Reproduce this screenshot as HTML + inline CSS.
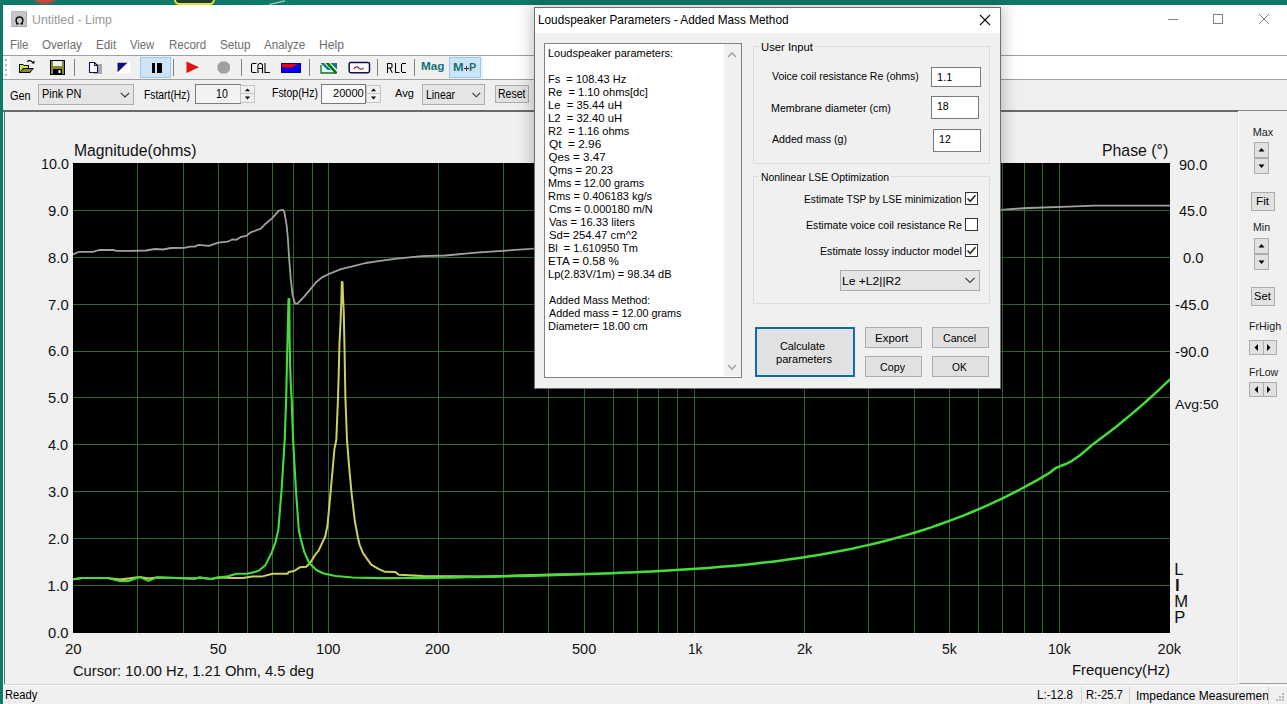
<!DOCTYPE html>
<html><head><meta charset="utf-8">
<style>
*{box-sizing:border-box}
html,body{margin:0;padding:0}
body{width:1287px;height:704px;overflow:hidden;position:relative;background:#0f7a6a;font-family:"Liberation Sans",sans-serif;color:#000}
.a{position:absolute}
.t{position:absolute;white-space:pre;line-height:1}
</style></head><body>
<!-- desktop bits -->
<div class="a" style="left:31px;top:-8px;width:28px;height:13px;background:radial-gradient(ellipse at 50% 40%,#d0483a 0%,#c8463a 45%,rgba(200,70,58,0.0) 72%)"></div>
<div class="a" style="left:174px;top:-6px;width:41px;height:11px;border:2.5px solid #e6e23c;border-radius:6px;background:#1f3a30"></div><svg class="a" style="left:268px;top:0" width="18" height="5"><path d="M1 4.5 L17 0.8" stroke="#b8c8c0" stroke-width="1.2"/></svg>
<!-- main window -->
<div class="a" style="left:3px;top:5px;width:1284px;height:699px;background:#f0f0f0"></div>
<div class="a" style="left:3px;top:5px;width:1284px;height:50px;background:#fff"></div>
<div class="a" style="left:3px;top:55px;width:1284px;height:1px;background:#a0a0a0"></div>
<div class="a" style="left:3px;top:56px;width:1284px;height:23px;background:#fff"></div>
<div class="a" style="left:10px;top:56px;width:473px;height:23px;background:#f0f0f0"></div>
<div class="a" style="left:3px;top:79px;width:1284px;height:1px;background:#a0a0a0"></div>
<div class="a" style="left:3px;top:80px;width:1284px;height:30px;background:#efefef"></div>
<div class="a" style="left:3px;top:110px;width:1235px;height:2px;background:#6a6a6a"></div>
<div class="a" style="left:1238px;top:110px;width:49px;height:1px;background:#8a8a8a"></div>
<div class="a" style="left:4px;top:110px;width:1px;height:574px;background:#6a6a6a"></div>
<div class="a" style="left:1237px;top:112px;width:1px;height:572px;background:#e2e2e2"></div><div class="a" style="left:1238px;top:111px;width:1px;height:573px;background:#fff"></div>
<!-- title -->
<div class="a" style="left:11px;top:11px;width:16px;height:16px;background:#c6c6c6;border:1px solid #bdbdbd;border-right-color:#a8a8a8;border-bottom-color:#a8a8a8"></div>
<svg class="a" style="left:14.5px;top:15.5px" width="10" height="9"><path d="M2.6 7.6 Q0.8 6 1.1 3.8 Q1.6 1 4.5 1 Q7.4 1 7.9 3.8 Q8.2 6 6.4 7.6" stroke="#111" stroke-width="1.5" fill="none"/><path d="M1 7.7 H3.6 M5.4 7.7 H8" stroke="#111" stroke-width="1.5"/></svg>

<div class="a" style="left:1168px;top:19px;width:10px;height:1px;background:#808080"></div>
<div class="a" style="left:1213px;top:14px;width:10px;height:10px;border:1px solid #808080"></div>
<svg class="a" style="left:1258px;top:13px" width="12" height="12"><path d="M1 1L11 11M11 1L1 11" stroke="#808080" stroke-width="1"/></svg>
<!-- menu -->

<!-- toolbar -->
<div class="a" style="left:5px;top:59px;width:2px;height:2px;background:#b4b4b4"></div>
<div class="a" style="left:5px;top:64px;width:2px;height:2px;background:#b4b4b4"></div>
<div class="a" style="left:5px;top:69px;width:2px;height:2px;background:#b4b4b4"></div>
<div class="a" style="left:5px;top:74px;width:2px;height:2px;background:#b4b4b4"></div>
<svg class="a" style="left:18px;top:59px" width="18" height="16">
 <path d="M9 2.5 Q12 0.5 15 3.5" stroke="#000" stroke-width="1.3" fill="none"/><path d="M13.5 4.5 L16.5 4.5 L16.5 1.5Z" fill="#000"/>
 <path d="M1 5 L5 5 L6 6 L11 6 L11 9 L16 9 L12 14 L1 14Z" fill="#000"/>
 <path d="M2 6 L5 6 L6 7 L10 7 L10 9 L5 9 L2 13Z" fill="#c8f040"/>
 <path d="M5.5 10 L14.5 10 L11.5 13 L2.5 13Z" fill="#8a8a30"/>
</svg>
<svg class="a" style="left:50px;top:60px" width="15" height="15">
 <rect x="0.5" y="0.5" width="14" height="14" fill="#8a8a30" stroke="#000"/>
 <rect x="3" y="1" width="9" height="5" fill="#eee"/>
 <rect x="3" y="9" width="9" height="5" fill="#000"/>
 <rect x="8.5" y="10" width="2" height="3" fill="#fff"/>
</svg>
<div class="a" style="left:74px;top:59px;width:1px;height:17px;background:#808080"></div>
<svg class="a" style="left:88px;top:61px" width="16" height="15">
 <rect x="5" y="3" width="9" height="10" fill="#a8a8b0"/>
 <path d="M1.5 1.5 L6.5 1.5 L9.5 4.5 L9.5 11.5 L1.5 11.5Z" fill="#fff" stroke="#101060" stroke-width="1.1"/>
 <path d="M6.5 1.5 V4.5 H9.5" stroke="#101060" stroke-width="1" fill="none"/>
</svg>
<svg class="a" style="left:116px;top:62px" width="15" height="12">
 <rect x="1" y="0.5" width="13" height="10.5" fill="#fff"/>
 <path d="M1.5 0.8 L11.5 0.8 L1.5 10.2Z" fill="#10107a"/>
</svg>
<div class="a" style="left:140px;top:57px;width:31px;height:21px;background:#cce4f7;border:1px solid #99c9ef"></div>
<div class="a" style="left:151.5px;top:63px;width:3px;height:10px;background:#000"></div>
<div class="a" style="left:156.5px;top:63px;width:5.5px;height:10px;background:#000"></div>
<div class="a" style="left:173px;top:59px;width:1px;height:17px;background:#808080"></div>
<svg class="a" style="left:186px;top:61px" width="14" height="13"><path d="M0.5 0.5 L13 6.2 L0.5 12Z" fill="#e81010"/></svg>
<svg class="a" style="left:217px;top:61px" width="14" height="13"><path d="M4 0.5 L9.5 0.5 L13 4 L13 9 L9.5 12.5 L4 12.5 L0.5 9 L0.5 4Z" fill="#a0a0a0"/></svg>
<div class="a" style="left:241px;top:59px;width:1px;height:17px;background:#808080"></div>

<svg class="a" style="left:281px;top:63px" width="20" height="10">
 <rect x="0" y="0" width="20" height="10" fill="#0000f0"/>
 <path d="M0 0 L18 0 L11.5 4.6 L0 4.6Z" fill="#f00010"/>
 <rect x="0.5" y="0.5" width="19" height="9" fill="none" stroke="#00008a" stroke-width="1"/>
</svg>
<div class="a" style="left:309px;top:59px;width:1px;height:17px;background:#808080"></div>
<svg class="a" style="left:320px;top:62px" width="18" height="12">
 <rect x="0.5" y="1" width="16.5" height="10.5" fill="#d8fff0"/>
 <path d="M0.5 1 L4 1 L11 8 L7.5 8Z" fill="#167a78"/>
 <path d="M5.5 1 L9 1 L17 10 L17 11.5 L15 11.5Z" fill="#0a6e14"/>
 <path d="M10.5 1 L17 1 L17 7.5Z" fill="#167a78"/>
 <path d="M1 3 V11 H16" stroke="#1a6a20" stroke-width="1.3" fill="none"/>
</svg>
<svg class="a" style="left:348px;top:61px" width="23" height="13">
 <rect x="1.2" y="1.5" width="20.3" height="10.2" rx="1.6" fill="#fff" stroke="#10104a" stroke-width="1.5"/>
 <path d="M6 7.8 Q8.2 4.6 10.5 6.6 Q12.8 9.6 15.6 6.8" stroke="#8a1a2a" stroke-width="1.2" fill="none"/>
</svg>
<div class="a" style="left:377px;top:59px;width:1px;height:17px;background:#808080"></div>

<div class="a" style="left:414px;top:59px;width:1px;height:17px;background:#808080"></div>

<div class="a" style="left:449px;top:57px;width:32px;height:21px;background:#cce4f7;border:1px solid #99c9ef"></div>


<svg class="a" style="left:0;top:0" width="500" height="80" fill="none" stroke="#000" stroke-width="1.05">
<path d="M256.5 63.5 H252.5 L251.5 64.5 V71.5 L252.5 72.5 H256.5"/>
<path d="M258 73 V65 L259.3 63.5 H261.2 L262.5 65 V73 M258 68.5 H262.5"/>
<path d="M265 63 V72.5 H270"/>
<path d="M387.5 73 V63.5 H391 L392 64.5 V67 L391 68 H387.5 M389.8 68 L392.3 72.8"/>
<path d="M395.5 63 V72.5 H399.5"/>
<path d="M406 63.5 H402.5 L401.5 64.5 V71.5 L402.5 72.5 H406"/>
</svg>
<svg class="a" style="left:0;top:0" width="1287" height="704" shape-rendering="crispEdges">
<rect x="73" y="163" width="1097" height="470" fill="#000"/>
<path d="M137.5 163V633M183.5 163V633M218.5 163V633M247.5 163V633M272.5 163V633M293.5 163V633M312.5 163V633M328.5 163V633M438.5 163V633M503.5 163V633M548.5 163V633M584.5 163V633M613.5 163V633M637.5 163V633M658.5 163V633M677.5 163V633M694.5 163V633M804.5 163V633M868.5 163V633M914.5 163V633M949.5 163V633M978.5 163V633M1002.5 163V633M1024.5 163V633M1042.5 163V633M1059.5 163V633M73 210.5H1170M73 257.5H1170M73 304.5H1170M73 351.5H1170M73 397.5H1170M73 444.5H1170M73 491.5H1170M73 538.5H1170M73 585.5H1170" stroke="#30682f" stroke-width="1" fill="none"/>
</svg><svg class="a" style="left:0;top:0" width="1287" height="704">
<defs><clipPath id="pc"><rect x="73" y="163" width="1097" height="470"/></clipPath></defs>
<g clip-path="url(#pc)" fill="none" stroke-width="2" stroke-linejoin="round">
<polyline points="73.0,254.5 79.0,251.8 93.0,251.8 99.0,250.0 114.0,250.0 116.0,250.8 131.0,250.8 146.0,250.5 155.0,249.0 163.0,249.5 171.0,248.0 184.0,247.8 190.0,246.6 195.1,246.6 198.5,244.8 208.8,245.8 218.2,242.7 227.6,241.7 232.7,239.3 236.2,239.8 241.3,236.8 246.4,235.9 250.7,232.3 260.9,228.6 264.4,224.8 272.0,218.4 278.9,210.7 283.2,209.8 284.3,212.0 286.6,224.8 287.9,238.5 289.1,258.1 290.6,277.3 292.5,294.7 295.0,303.7 297.4,303.7 303.7,297.2 309.9,289.8 316.1,282.3 322.3,277.1 328.5,274.2 341.0,269.2 353.4,266.1 365.8,263.0 378.3,261.1 397.0,258.7 421.8,256.2 445.0,255.5 479.5,252.4 534.5,248.6 700.0,235.0 900.0,218.0 1001.0,209.8 1012.0,209.0 1028.0,208.0 1069.0,206.7 1094.0,205.7 1170.0,205.7" stroke="#a0a0a0" stroke-width="1.8"/>
<polyline points="73.0,579.3 82.4,578.0 107.3,578.0 119.8,579.5 128.5,578.5 139.7,577.1 148.4,578.5 157.0,577.4 175.7,578.0 194.4,578.6 200.0,577.6 211.2,579.0 217.7,577.6 234.5,578.0 242.9,578.0 252.2,576.6 261.5,576.6 272.7,573.8 287.6,573.8 288.6,572.0 294.2,571.0 299.8,567.3 306.3,566.8 310.0,563.1 315.6,554.2 318.5,550.9 325.4,536.0 327.5,525.3 330.3,495.4 332.4,472.0 334.5,448.5 336.3,440.0 338.0,398.0 338.8,370.0 339.5,343.0 340.5,323.0 341.3,302.0 341.8,282.0 342.5,282.0 343.0,296.0 343.7,311.0 344.5,347.0 345.4,398.0 347.0,440.0 349.4,470.0 351.6,493.3 354.8,521.0 358.0,538.0 359.7,545.0 361.4,549.3 363.5,553.9 367.8,559.9 371.2,564.6 378.4,568.8 385.1,571.8 395.4,572.1 398.8,574.7 409.0,575.2 422.7,575.9 482.6,576.4 551.0,574.6 585.0,574.0" stroke="#cdd060"/>
<polyline points="73.0,579.3 82.4,578.0 107.3,578.0 119.8,581.1 128.5,580.9 139.7,577.1 148.4,580.9 157.0,577.4 175.7,578.0 194.4,578.6 200.0,577.6 211.2,579.0 217.7,577.6 228.0,576.2 236.4,573.8 248.5,573.6 258.7,570.8 265.3,565.4 271.8,552.4 275.5,542.1 278.3,530.0 281.5,491.0 284.7,440.0 286.2,398.0 287.0,360.0 287.8,330.0 288.5,299.0 289.3,299.0 289.5,330.0 290.0,361.0 290.8,385.0 291.6,398.0 293.1,440.0 296.0,491.0 298.8,530.0 300.7,538.4 304.4,552.4 308.2,560.8 310.0,563.7 316.4,570.0 322.8,573.3 335.6,576.0 352.6,577.5 380.0,578.1 388.0,578.1 396.0,578.1 404.0,578.0 412.0,577.9 420.0,577.9" stroke="#46dc3a" stroke-width="2.1"/>
<polyline points="412.0,577.9 420.0,577.9 428.0,577.8 436.0,577.7 444.0,577.6 452.0,577.4 460.0,577.3 468.0,577.1 476.0,577.0 484.0,576.8 492.0,576.7 500.0,576.5 508.0,576.3 516.0,576.1 524.0,575.9 532.0,575.7 540.0,575.5 548.0,575.3 556.0,575.0 564.0,574.8 572.0,574.6 580.0,574.3 588.0,574.0 596.0,573.8 604.0,573.5 612.0,573.2 620.0,572.8 628.0,572.5 636.0,572.2 644.0,571.8 652.0,571.4 660.0,571.0 668.0,570.5 676.0,570.1 684.0,569.6 692.0,569.0 700.0,568.5 708.0,567.9 716.0,567.3 724.0,566.6 732.0,565.9 740.0,565.2 748.0,564.4 756.0,563.5 764.0,562.6 772.0,561.7 780.0,560.7 788.0,559.6 796.0,558.5 804.0,557.3 812.0,556.0 820.0,554.7 828.0,553.3 836.0,551.8 844.0,550.3 852.0,548.7 860.0,546.9 868.0,545.1 876.0,543.2 884.0,541.2 892.0,539.1 900.0,536.9 908.0,534.6 916.0,532.2 924.0,529.7 932.0,527.1 940.0,524.3 948.0,521.4 956.0,518.4 964.0,515.3 972.0,512.0 980.0,508.6 988.0,505.1 996.0,501.4 1004.0,497.6 1012.0,493.6 1020.0,489.5 1028.0,485.2 1036.0,480.8 1044.0,476.2 1050.0,472.6 1056.0,467.8 1061.0,465.8 1066.0,464.0 1072.0,460.8 1080.0,455.2 1088.0,448.5 1094.0,443.4 1100.0,439.0 1106.0,434.5 1112.0,429.9 1118.0,425.2 1124.0,420.3 1130.0,415.4 1136.0,410.3 1142.0,405.1 1148.0,399.8 1154.0,394.4 1160.0,388.9 1166.0,383.2 1171.0,378.5" stroke="#46dc3a" stroke-width="2.5"/>
</g></svg>
<div class="t" style="left:40.53px;top:155.77px;font-size:15.21px;color:#111;font-family:'Liberation Sans',sans-serif;transform:scaleX(0.942);transform-origin:0 0;">10.0</div>
<div class="t" style="left:47.83px;top:202.69px;font-size:15.21px;color:#111;font-family:'Liberation Sans',sans-serif;transform:scaleX(0.974);transform-origin:0 0;">9.0</div>
<div class="t" style="left:47.83px;top:249.61px;font-size:15.21px;color:#111;font-family:'Liberation Sans',sans-serif;transform:scaleX(0.974);transform-origin:0 0;">8.0</div>
<div class="t" style="left:47.76px;top:296.53px;font-size:15.21px;color:#111;font-family:'Liberation Sans',sans-serif;transform:scaleX(0.977);transform-origin:0 0;">7.0</div>
<div class="t" style="left:47.76px;top:343.45px;font-size:15.21px;color:#111;font-family:'Liberation Sans',sans-serif;transform:scaleX(0.977);transform-origin:0 0;">6.0</div>
<div class="t" style="left:47.91px;top:390.37px;font-size:15.21px;color:#111;font-family:'Liberation Sans',sans-serif;transform:scaleX(0.970);transform-origin:0 0;">5.0</div>
<div class="t" style="left:48.21px;top:437.29px;font-size:15.21px;color:#111;font-family:'Liberation Sans',sans-serif;transform:scaleX(0.955);transform-origin:0 0;">4.0</div>
<div class="t" style="left:47.91px;top:484.21px;font-size:15.21px;color:#111;font-family:'Liberation Sans',sans-serif;transform:scaleX(0.970);transform-origin:0 0;">3.0</div>
<div class="t" style="left:47.76px;top:531.13px;font-size:15.21px;color:#111;font-family:'Liberation Sans',sans-serif;transform:scaleX(0.977);transform-origin:0 0;">2.0</div>
<div class="t" style="left:47.36px;top:578.05px;font-size:15.21px;color:#111;font-family:'Liberation Sans',sans-serif;">1.0</div>
<div class="t" style="left:47.91px;top:624.97px;font-size:15.21px;color:#111;font-family:'Liberation Sans',sans-serif;transform:scaleX(0.970);transform-origin:0 0;">0.0</div>
<div class="t" style="left:1178.85px;top:156.57px;font-size:15.21px;color:#111;font-family:'Liberation Sans',sans-serif;transform:scaleX(0.955);transform-origin:0 0;">90.0</div>
<div class="t" style="left:1179.21px;top:203.42px;font-size:15.21px;color:#111;font-family:'Liberation Sans',sans-serif;transform:scaleX(0.943);transform-origin:0 0;">45.0</div>
<div class="t" style="left:1182.71px;top:250.27px;font-size:15.21px;color:#111;font-family:'Liberation Sans',sans-serif;transform:scaleX(0.970);transform-origin:0 0;">0.0</div>
<div class="t" style="left:1174.63px;top:297.12px;font-size:15.21px;color:#111;font-family:'Liberation Sans',sans-serif;transform:scaleX(0.977);transform-origin:0 0;">-45.0</div>
<div class="t" style="left:1174.63px;top:343.97px;font-size:15.21px;color:#111;font-family:'Liberation Sans',sans-serif;transform:scaleX(0.977);transform-origin:0 0;">-90.0</div>
<div class="t" style="left:1175.30px;top:399.23px;font-size:12.09px;color:#111;font-family:'Liberation Sans',sans-serif;transform:scaleX(1.165);transform-origin:0 0;">Avg:50</div>
<div class="t" style="left:74.34px;top:142.70px;font-size:15.61px;color:#111;font-family:'Liberation Sans',sans-serif;transform:scaleX(1.008);transform-origin:0 0;">Magnitude(ohms)</div>
<div class="t" style="left:1101.53px;top:143.39px;font-size:15.72px;color:#111;font-family:'Liberation Sans',sans-serif;transform:scaleX(1.007);transform-origin:0 0;">Phase (°)</div>
<div class="t" style="left:64.75px;top:641.49px;font-size:15.07px;color:#111;font-family:'Liberation Sans',sans-serif;transform:scaleX(0.990);transform-origin:0 0;">20</div>
<div class="t" style="left:209.80px;top:641.49px;font-size:15.07px;color:#111;font-family:'Liberation Sans',sans-serif;">50</div>
<div class="t" style="left:315.70px;top:641.49px;font-size:15.07px;color:#111;font-family:'Liberation Sans',sans-serif;transform:scaleX(0.973);transform-origin:0 0;">100</div>
<div class="t" style="left:425.25px;top:641.49px;font-size:15.07px;color:#111;font-family:'Liberation Sans',sans-serif;transform:scaleX(0.991);transform-origin:0 0;">200</div>
<div class="t" style="left:571.92px;top:641.49px;font-size:15.07px;color:#111;font-family:'Liberation Sans',sans-serif;transform:scaleX(0.968);transform-origin:0 0;">500</div>
<div class="t" style="left:687.57px;top:641.91px;font-size:14.76px;color:#111;font-family:'Liberation Sans',sans-serif;transform:scaleX(0.926);transform-origin:0 0;">1k</div>
<div class="t" style="left:796.57px;top:641.91px;font-size:14.76px;color:#111;font-family:'Liberation Sans',sans-serif;transform:scaleX(0.984);transform-origin:0 0;">2k</div>
<div class="t" style="left:941.94px;top:641.93px;font-size:14.56px;color:#111;font-family:'Liberation Sans',sans-serif;transform:scaleX(0.961);transform-origin:0 0;">5k</div>
<div class="t" style="left:1048.14px;top:641.93px;font-size:14.56px;color:#111;font-family:'Liberation Sans',sans-serif;transform:scaleX(0.967);transform-origin:0 0;">10k</div>
<div class="t" style="left:1157.57px;top:641.93px;font-size:14.56px;color:#111;font-family:'Liberation Sans',sans-serif;">20k</div>
<div class="t" style="left:1071.81px;top:662.60px;font-size:14.01px;color:#111;font-family:'Liberation Sans',sans-serif;transform:scaleX(1.059);transform-origin:0 0;">Frequency(Hz)</div>
<div class="t" style="left:72.77px;top:662.82px;font-size:15.51px;color:#111;font-family:'Liberation Sans',sans-serif;transform:scaleX(0.948);transform-origin:0 0;">Cursor: 10.00 Hz, 1.21 Ohm, 4.5 deg</div>
<div class="t" style="left:1174.37px;top:561.95px;font-size:16.60px;color:#111;font-family:'Liberation Sans',sans-serif;">L</div>
<div class="t" style="left:1173.52px;top:577.95px;font-size:16.60px;color:#111;font-family:'Liberation Sans',sans-serif;transform:scaleX(1.458);transform-origin:0 0;">I</div>
<div class="t" style="left:1174.37px;top:593.95px;font-size:16.60px;color:#111;font-family:'Liberation Sans',sans-serif;">M</div>
<div class="t" style="left:1174.37px;top:609.95px;font-size:16.60px;color:#111;font-family:'Liberation Sans',sans-serif;">P</div>
<div class="t" style="left:31.87px;top:13.78px;font-size:12.51px;color:#999;font-family:'Liberation Sans',sans-serif;transform:scaleX(0.992);transform-origin:0 0;">Untitled - Limp</div>
<div class="t" style="left:9.88px;top:39.21px;font-size:12.24px;color:#6d6d6d;font-family:'Liberation Sans',sans-serif;transform:scaleX(0.935);transform-origin:0 0;">File</div>
<div class="t" style="left:42.08px;top:38.93px;font-size:12.94px;color:#6d6d6d;font-family:'Liberation Sans',sans-serif;transform:scaleX(0.895);transform-origin:0 0;">Overlay</div>
<div class="t" style="left:95.66px;top:39.21px;font-size:12.24px;color:#6d6d6d;font-family:'Liberation Sans',sans-serif;transform:scaleX(0.959);transform-origin:0 0;">Edit</div>
<div class="t" style="left:130.34px;top:39.21px;font-size:12.24px;color:#6d6d6d;font-family:'Liberation Sans',sans-serif;transform:scaleX(0.921);transform-origin:0 0;">View</div>
<div class="t" style="left:168.88px;top:38.98px;font-size:12.52px;color:#6d6d6d;font-family:'Liberation Sans',sans-serif;transform:scaleX(0.918);transform-origin:0 0;">Record</div>
<div class="t" style="left:219.68px;top:39.02px;font-size:12.86px;color:#6d6d6d;font-family:'Liberation Sans',sans-serif;transform:scaleX(0.906);transform-origin:0 0;">Setup</div>
<div class="t" style="left:264.30px;top:38.93px;font-size:12.94px;color:#6d6d6d;font-family:'Liberation Sans',sans-serif;transform:scaleX(0.896);transform-origin:0 0;">Analyze</div>
<div class="t" style="left:319.03px;top:38.93px;font-size:12.94px;color:#6d6d6d;font-family:'Liberation Sans',sans-serif;transform:scaleX(0.938);transform-origin:0 0;">Help</div>
<div class="t" style="left:10.35px;top:89.94px;font-size:12.68px;color:#000;font-family:'Liberation Sans',sans-serif;transform:scaleX(0.862);transform-origin:0 0;">Gen</div>
<div class="a" style="left:38px;top:84px;width:96px;height:21px;background:#e5e5e5;border:1px solid #adadad"></div>
<div class="t" style="left:41.73px;top:88.66px;font-size:11.86px;color:#000;font-family:'Liberation Sans',sans-serif;transform:scaleX(0.921);transform-origin:0 0;">Pink PN</div>
<svg class="a" style="left:120px;top:92px" width="10" height="6"><path d="M0.8 0.8 L5 5 L9.2 0.8" stroke="#333" stroke-width="1.1" fill="none"/></svg>
<div class="t" style="left:143.67px;top:89.86px;font-size:11.87px;color:#000;font-family:'Liberation Sans',sans-serif;transform:scaleX(0.872);transform-origin:0 0;">Fstart(Hz)</div>
<div class="a" style="left:195px;top:84px;width:46px;height:20px;background:#f2f2f2;border:1px solid #7a7a7a"></div>
<div class="t" style="left:216.01px;top:87.83px;font-size:12.11px;color:#000;font-family:'Liberation Sans',sans-serif;transform:scaleX(0.875);transform-origin:0 0;">10</div>
<div class="a" style="left:240px;top:85px;width:15px;height:9px;background:#f0f0f0;border:1px solid #c4c4c4"></div><div class="a" style="left:240px;top:93px;width:15px;height:10px;background:#f0f0f0;border:1px solid #c4c4c4"></div><svg class="a" style="left:240px;top:85px" width="15" height="18"><path d="M4.9 6.2 L7.5 3.4 L10.1 6.2Z M4.9 11.6 L7.5 14.6 L10.1 11.6Z" fill="#000"/></svg>
<div class="t" style="left:271.76px;top:88.36px;font-size:11.87px;color:#000;font-family:'Liberation Sans',sans-serif;transform:scaleX(0.881);transform-origin:0 0;">Fstop(Hz)</div>
<div class="a" style="left:321px;top:84px;width:45px;height:20px;background:#f8f8f8;border:1px solid #7a7a7a"></div>
<div class="t" style="left:332.65px;top:87.87px;font-size:11.83px;color:#000;font-family:'Liberation Sans',sans-serif;transform:scaleX(0.935);transform-origin:0 0;">20000</div>
<div class="a" style="left:366px;top:85px;width:15px;height:9px;background:#f0f0f0;border:1px solid #c4c4c4"></div><div class="a" style="left:366px;top:93px;width:15px;height:10px;background:#f0f0f0;border:1px solid #c4c4c4"></div><svg class="a" style="left:366px;top:85px" width="15" height="18"><path d="M4.9 6.2 L7.5 3.4 L10.1 6.2Z M4.9 11.6 L7.5 14.6 L10.1 11.6Z" fill="#000"/></svg>
<div class="t" style="left:395.20px;top:88.44px;font-size:11.22px;color:#000;font-family:'Liberation Sans',sans-serif;transform:scaleX(0.983);transform-origin:0 0;">Avg</div>
<div class="a" style="left:422px;top:84px;width:63px;height:21px;background:#e5e5e5;border:1px solid #adadad"></div>
<div class="t" style="left:425.86px;top:89.21px;font-size:12.24px;color:#000;font-family:'Liberation Sans',sans-serif;transform:scaleX(0.853);transform-origin:0 0;">Linear</div>
<svg class="a" style="left:472px;top:92px" width="9" height="6"><path d="M0.5 0.8 L4.3 4.8 L8.2 0.8" stroke="#333" stroke-width="1.1" fill="none"/></svg>
<div class="a" style="left:495px;top:85px;width:34px;height:18px;background:#e1e1e1;border:1px solid #adadad"></div>
<div class="t" style="left:497.76px;top:87.81px;font-size:12.71px;color:#000;font-family:'Liberation Sans',sans-serif;transform:scaleX(0.829);transform-origin:0 0;">Reset</div>
<div class="t" style="left:421.24px;top:62.47px;font-size:10.44px;color:#137373;font-family:'Liberation Sans',sans-serif;font-weight:bold;transform:scaleX(1.126);transform-origin:0 0;">Mag</div>
<div class="t" style="left:453.17px;top:62.21px;font-size:11.45px;color:#137373;font-family:'Liberation Sans',sans-serif;font-weight:bold;transform:scaleX(1.110);transform-origin:0 0;">M</div>
<div class="a" style="left:464px;top:67.8px;width:5px;height:1.5px;background:#4a2030"></div><div class="a" style="left:465.8px;top:66px;width:1.5px;height:5px;background:#4a2030"></div>
<div class="t" style="left:469.30px;top:62.21px;font-size:11.45px;color:#137373;font-family:'Liberation Sans',sans-serif;font-weight:bold;transform:scaleX(0.935);transform-origin:0 0;">P</div>

<div class="t" style="left:1252.63px;top:126.70px;font-size:10.86px;color:#1a1a1a;font-family:'Liberation Sans',sans-serif;">Max</div>
<div class="t" style="left:1252.65px;top:223.26px;font-size:10.21px;color:#1a1a1a;font-family:'Liberation Sans',sans-serif;transform:scaleX(1.037);transform-origin:0 0;">Min</div>
<div class="t" style="left:1248.74px;top:322.05px;font-size:10.27px;color:#1a1a1a;font-family:'Liberation Sans',sans-serif;transform:scaleX(1.044);transform-origin:0 0;">FrHigh</div>
<div class="t" style="left:1248.76px;top:366.95px;font-size:10.57px;color:#1a1a1a;font-family:'Liberation Sans',sans-serif;transform:scaleX(0.995);transform-origin:0 0;">FrLow</div>
<div class="a" style="left:1254px;top:142px;width:15px;height:16px;background:#e1e1e1;border:1px solid #adadad"></div>
<div class="a" style="left:1254px;top:158px;width:15px;height:16px;background:#e1e1e1;border:1px solid #adadad"></div>
<svg class="a" style="left:1254px;top:142px" width="15" height="32"><path d="M4.5 9.5 L7.5 6 L10.5 9.5Z M4.5 22.5 L7.5 26 L10.5 22.5Z" fill="#000"/></svg>
<div class="a" style="left:1254px;top:238px;width:15px;height:16px;background:#e1e1e1;border:1px solid #adadad"></div>
<div class="a" style="left:1254px;top:254px;width:15px;height:16px;background:#e1e1e1;border:1px solid #adadad"></div>
<svg class="a" style="left:1254px;top:238px" width="15" height="32"><path d="M4.5 9.5 L7.5 6 L10.5 9.5Z M4.5 22.5 L7.5 26 L10.5 22.5Z" fill="#000"/></svg>
<div class="a" style="left:1251px;top:192px;width:24px;height:19px;background:#e1e1e1;border:1px solid #adadad"></div>
<div class="t" style="left:1255.56px;top:196.83px;font-size:10.48px;color:#000;font-family:'Liberation Sans',sans-serif;transform:scaleX(1.127);transform-origin:0 0;">Fit</div>
<div class="a" style="left:1251px;top:287px;width:24px;height:19px;background:#e1e1e1;border:1px solid #adadad"></div>
<div class="t" style="left:1254.10px;top:291.45px;font-size:11.27px;color:#000;font-family:'Liberation Sans',sans-serif;transform:scaleX(0.992);transform-origin:0 0;">Set</div>
<div class="a" style="left:1249px;top:340px;width:15px;height:15px;background:#e1e1e1;border:1px solid #adadad"></div>
<div class="a" style="left:1263px;top:340px;width:14px;height:15px;background:#e1e1e1;border:1px solid #adadad"></div>
<svg class="a" style="left:1249px;top:340px" width="28" height="15"><path d="M9 4 L5.5 7.5 L9 11Z M18 4 L21.5 7.5 L18 11Z" fill="#000"/></svg>
<div class="a" style="left:1249px;top:382px;width:15px;height:15px;background:#e1e1e1;border:1px solid #adadad"></div>
<div class="a" style="left:1263px;top:382px;width:14px;height:15px;background:#e1e1e1;border:1px solid #adadad"></div>
<svg class="a" style="left:1249px;top:382px" width="28" height="15"><path d="M9 4 L5.5 7.5 L9 11Z M18 4 L21.5 7.5 L18 11Z" fill="#000"/></svg>
<div class="a" style="left:3px;top:684px;width:1235px;height:1px;background:#d4d4d4"></div>
<div class="a" style="left:3px;top:685px;width:1284px;height:1px;background:#fff"></div>
<div class="a" style="left:1239px;top:683px;width:48px;height:1px;background:#a0a0a0"></div>
<div class="t" style="left:4.71px;top:689.41px;font-size:12.30px;color:#000;font-family:'Liberation Sans',sans-serif;transform:scaleX(0.909);transform-origin:0 0;">Ready</div>
<div class="t" style="left:1037.47px;top:689.14px;font-size:12.68px;color:#000;font-family:'Liberation Sans',sans-serif;transform:scaleX(0.913);transform-origin:0 0;">L:-12.8</div>
<div class="t" style="left:1086.10px;top:689.14px;font-size:12.68px;color:#000;font-family:'Liberation Sans',sans-serif;transform:scaleX(0.887);transform-origin:0 0;">R:-25.7</div>
<div class="a" style="left:1136px;top:686px;width:132px;height:18px;overflow:hidden"><div class="t" style="left:0.32px;top:3.51px;font-size:12.30px;color:#000;font-family:'Liberation Sans',sans-serif;transform:scaleX(0.977);transform-origin:0 0;">Impedance Measuremen</div></div>
<div class="a" style="left:1081px;top:687px;width:1px;height:17px;background:#d0d0d0"></div>
<div class="a" style="left:1129px;top:687px;width:1px;height:17px;background:#d0d0d0"></div>
<div class="a" style="left:1268px;top:687px;width:1px;height:17px;background:#d0d0d0"></div>
<svg class="a" style="left:1273px;top:690px" width="14" height="14"><g fill="#b8b8b8"><rect x="9" y="3" width="2" height="2"/><rect x="6" y="6" width="2" height="2"/><rect x="9" y="6" width="2" height="2"/><rect x="3" y="9" width="2" height="2"/><rect x="6" y="9" width="2" height="2"/><rect x="9" y="9" width="2" height="2"/></g></svg>

<div class="a" style="left:534px;top:7px;width:467px;height:382px;background:#f0f0f0;border:1px solid #6f6f6f;box-shadow:0 0 14px 3px rgba(0,0,0,0.22)"></div>
<div class="a" style="left:535px;top:8px;width:465px;height:25px;background:#fff"></div>
<div class="t" style="left:537.66px;top:13.53px;font-size:12.94px;color:#000;font-family:'Liberation Sans',sans-serif;transform:scaleX(0.912);transform-origin:0 0;">Loudspeaker Parameters - Added Mass Method</div>
<svg class="a" style="left:979px;top:14px" width="12" height="12"><path d="M1 1L11 11M11 1L1 11" stroke="#111" stroke-width="1.15"/></svg>
<div class="a" style="left:544px;top:43px;width:198px;height:335px;background:#fff;border:1px solid #828282"></div>
<div class="a" style="left:724px;top:44px;width:17px;height:332px;background:#f0f0f0"></div>
<svg class="a" style="left:727px;top:51px" width="10" height="8"><path d="M1 6 L5 2 L9 6" stroke="#a6a6a6" stroke-width="1.6" fill="none"/></svg>
<svg class="a" style="left:727px;top:363px" width="10" height="8"><path d="M1 2 L5 6 L9 2" stroke="#a6a6a6" stroke-width="1.6" fill="none"/></svg>
<div class="t" style="left:548.22px;top:47.18px;font-size:11.60px;color:#000;font-family:'Liberation Sans',sans-serif;transform:scaleX(0.947);transform-origin:0 0;">Loudspeaker parameters:</div>
<div class="t" style="left:548.22px;top:73.18px;font-size:11.60px;color:#000;font-family:'Liberation Sans',sans-serif;transform:scaleX(0.951);transform-origin:0 0;">Fs  = 108.43 Hz</div>
<div class="t" style="left:548.21px;top:86.18px;font-size:11.60px;color:#000;font-family:'Liberation Sans',sans-serif;transform:scaleX(0.960);transform-origin:0 0;">Re  = 1.10 ohms[dc]</div>
<div class="t" style="left:548.20px;top:99.18px;font-size:11.60px;color:#000;font-family:'Liberation Sans',sans-serif;transform:scaleX(0.969);transform-origin:0 0;">Le  = 35.44 uH</div>
<div class="t" style="left:548.20px;top:112.18px;font-size:11.60px;color:#000;font-family:'Liberation Sans',sans-serif;transform:scaleX(0.969);transform-origin:0 0;">L2  = 32.40 uH</div>
<div class="t" style="left:548.22px;top:125.18px;font-size:11.60px;color:#000;font-family:'Liberation Sans',sans-serif;transform:scaleX(0.952);transform-origin:0 0;">R2  = 1.16 ohms</div>
<div class="t" style="left:548.57px;top:138.18px;font-size:11.60px;color:#000;font-family:'Liberation Sans',sans-serif;transform:scaleX(1.020);transform-origin:0 0;">Qt  = 2.96</div>
<div class="t" style="left:548.58px;top:151.18px;font-size:11.60px;color:#000;font-family:'Liberation Sans',sans-serif;">Qes = 3.47</div>
<div class="t" style="left:548.60px;top:164.18px;font-size:11.60px;color:#000;font-family:'Liberation Sans',sans-serif;transform:scaleX(0.960);transform-origin:0 0;">Qms = 20.23</div>
<div class="t" style="left:548.23px;top:177.18px;font-size:11.60px;color:#000;font-family:'Liberation Sans',sans-serif;transform:scaleX(0.935);transform-origin:0 0;">Mms = 12.00 grams</div>
<div class="t" style="left:548.22px;top:190.18px;font-size:11.60px;color:#000;font-family:'Liberation Sans',sans-serif;transform:scaleX(0.947);transform-origin:0 0;">Rms = 0.406183 kg/s</div>
<div class="t" style="left:548.55px;top:203.18px;font-size:11.60px;color:#000;font-family:'Liberation Sans',sans-serif;transform:scaleX(0.944);transform-origin:0 0;">Cms = 0.000180 m/N</div>
<div class="t" style="left:549.04px;top:216.18px;font-size:11.60px;color:#000;font-family:'Liberation Sans',sans-serif;transform:scaleX(0.964);transform-origin:0 0;">Vas = 16.33 liters</div>
<div class="t" style="left:548.59px;top:229.18px;font-size:11.60px;color:#000;font-family:'Liberation Sans',sans-serif;transform:scaleX(0.979);transform-origin:0 0;">Sd= 254.47 cm^2</div>
<div class="t" style="left:548.22px;top:242.18px;font-size:11.60px;color:#000;font-family:'Liberation Sans',sans-serif;transform:scaleX(0.947);transform-origin:0 0;">Bl  = 1.610950 Tm</div>
<div class="t" style="left:548.17px;top:255.18px;font-size:11.60px;color:#000;font-family:'Liberation Sans',sans-serif;transform:scaleX(1.006);transform-origin:0 0;">ETA = 0.58 %</div>
<div class="t" style="left:548.22px;top:268.18px;font-size:11.60px;color:#000;font-family:'Liberation Sans',sans-serif;transform:scaleX(0.951);transform-origin:0 0;">Lp(2.83V/1m) = 98.34 dB</div>
<div class="t" style="left:549.10px;top:294.18px;font-size:11.60px;color:#000;font-family:'Liberation Sans',sans-serif;transform:scaleX(0.924);transform-origin:0 0;">Added Mass Method:</div>
<div class="t" style="left:549.10px;top:307.18px;font-size:11.60px;color:#000;font-family:'Liberation Sans',sans-serif;transform:scaleX(0.932);transform-origin:0 0;">Added mass = 12.00 grams</div>
<div class="t" style="left:548.22px;top:320.18px;font-size:11.60px;color:#000;font-family:'Liberation Sans',sans-serif;transform:scaleX(0.953);transform-origin:0 0;">Diameter= 18.00 cm</div>
<div class="a" style="left:753px;top:46px;width:237px;height:118px;border:1px solid #dcdcdc"></div>
<div class="a" style="left:759px;top:40px;width:56px;height:12px;background:#f0f0f0"></div>
<div class="t" style="left:760.66px;top:40.78px;font-size:11.60px;color:#000;font-family:'Liberation Sans',sans-serif;transform:scaleX(0.971);transform-origin:0 0;">User Input</div>
<div class="t" style="left:771.75px;top:70.18px;font-size:11.60px;color:#000;font-family:'Liberation Sans',sans-serif;transform:scaleX(0.904);transform-origin:0 0;">Voice coil resistance Re (ohms)</div>
<div class="t" style="left:770.95px;top:102.18px;font-size:11.60px;color:#000;font-family:'Liberation Sans',sans-serif;transform:scaleX(0.921);transform-origin:0 0;">Membrane diameter (cm)</div>
<div class="t" style="left:771.80px;top:133.38px;font-size:11.60px;color:#000;font-family:'Liberation Sans',sans-serif;transform:scaleX(0.917);transform-origin:0 0;">Added mass (g)</div>
<div class="a" style="left:931px;top:67px;width:50px;height:20px;background:#fff;border:1px solid #7a7a7a"></div>
<div class="a" style="left:931px;top:96px;width:48px;height:23px;background:#fff;border:1px solid #7a7a7a"></div>
<div class="a" style="left:933px;top:129px;width:48px;height:23px;background:#fff;border:1px solid #7a7a7a"></div>
<div class="t" style="left:937.47px;top:70.98px;font-size:11.60px;color:#000;font-family:'Liberation Sans',sans-serif;transform:scaleX(0.957);transform-origin:0 0;">1.1</div>
<div class="t" style="left:937.21px;top:100.48px;font-size:11.60px;color:#000;font-family:'Liberation Sans',sans-serif;transform:scaleX(0.910);transform-origin:0 0;">18</div>
<div class="t" style="left:939.20px;top:132.78px;font-size:11.60px;color:#000;font-family:'Liberation Sans',sans-serif;transform:scaleX(0.919);transform-origin:0 0;">12</div>
<div class="a" style="left:753px;top:176px;width:237px;height:128px;border:1px solid #dcdcdc"></div>
<div class="a" style="left:759px;top:170px;width:132px;height:12px;background:#f0f0f0"></div>
<div class="t" style="left:760.77px;top:171.38px;font-size:11.60px;color:#000;font-family:'Liberation Sans',sans-serif;transform:scaleX(0.899);transform-origin:0 0;">Nonlinear LSE Optimization</div>
<div class="t" style="left:803.98px;top:192.98px;font-size:11.60px;color:#000;font-family:'Liberation Sans',sans-serif;transform:scaleX(0.882);transform-origin:0 0;">Estimate TSP by LSE minimization</div>
<div class="t" style="left:805.55px;top:219.18px;font-size:11.60px;color:#000;font-family:'Liberation Sans',sans-serif;transform:scaleX(0.916);transform-origin:0 0;">Estimate voice coil resistance Re</div>
<div class="t" style="left:819.85px;top:245.28px;font-size:11.60px;color:#000;font-family:'Liberation Sans',sans-serif;transform:scaleX(0.921);transform-origin:0 0;">Estimate lossy inductor model</div>
<div class="a" style="left:965px;top:192px;width:13px;height:13px;background:#fff;border:1px solid #333"></div>
<svg class="a" style="left:965px;top:192px" width="13" height="13"><path d="M2.5 6.5 L5.2 9.3 L10.5 3.2" stroke="#222" stroke-width="1.5" fill="none"/></svg>
<div class="a" style="left:965px;top:218px;width:13px;height:13px;background:#fff;border:1px solid #333"></div>
<div class="a" style="left:965px;top:244px;width:13px;height:13px;background:#fff;border:1px solid #333"></div>
<svg class="a" style="left:965px;top:244px" width="13" height="13"><path d="M2.5 6.5 L5.2 9.3 L10.5 3.2" stroke="#222" stroke-width="1.5" fill="none"/></svg>
<div class="a" style="left:840px;top:270px;width:140px;height:21px;background:#e5e5e5;border:1px solid #adadad"></div>
<div class="t" style="left:842.43px;top:275.38px;font-size:11.60px;color:#000;font-family:'Liberation Sans',sans-serif;transform:scaleX(1.042);transform-origin:0 0;">Le +L2||R2</div>
<svg class="a" style="left:965px;top:277px" width="10" height="7"><path d="M0.5 1 L5 5.5 L9.5 1" stroke="#444" stroke-width="1.1" fill="none"/></svg>
<div class="a" style="left:755px;top:327px;width:100px;height:50px;background:#e1e1e1;border:2px solid #1c65a8;box-shadow:inset 0 0 0 1px #cde8fb"></div>
<div class="t" style="left:779.86px;top:339.98px;font-size:11.60px;color:#000;font-family:'Liberation Sans',sans-serif;transform:scaleX(0.931);transform-origin:0 0;">Calculate</div>
<div class="t" style="left:775.68px;top:352.78px;font-size:11.60px;color:#000;font-family:'Liberation Sans',sans-serif;transform:scaleX(0.954);transform-origin:0 0;">parameters</div>
<div class="a" style="left:865px;top:327px;width:57px;height:21px;background:#e1e1e1;border:1px solid #adadad"></div>
<div class="t" style="left:875.48px;top:332.08px;font-size:11.60px;color:#000;font-family:'Liberation Sans',sans-serif;transform:scaleX(0.994);transform-origin:0 0;">Export</div>
<div class="a" style="left:932px;top:327px;width:57px;height:21px;background:#e1e1e1;border:1px solid #adadad"></div>
<div class="t" style="left:943.07px;top:332.08px;font-size:11.60px;color:#000;font-family:'Liberation Sans',sans-serif;transform:scaleX(0.915);transform-origin:0 0;">Cancel</div>
<div class="a" style="left:865px;top:356px;width:57px;height:21px;background:#e1e1e1;border:1px solid #adadad"></div>
<div class="t" style="left:880.26px;top:361.08px;font-size:11.60px;color:#000;font-family:'Liberation Sans',sans-serif;transform:scaleX(0.924);transform-origin:0 0;">Copy</div>
<div class="a" style="left:932px;top:356px;width:57px;height:21px;background:#e1e1e1;border:1px solid #adadad"></div>
<div class="t" style="left:952.04px;top:361.08px;font-size:11.60px;color:#000;font-family:'Liberation Sans',sans-serif;transform:scaleX(0.881);transform-origin:0 0;">OK</div>

</body></html>
